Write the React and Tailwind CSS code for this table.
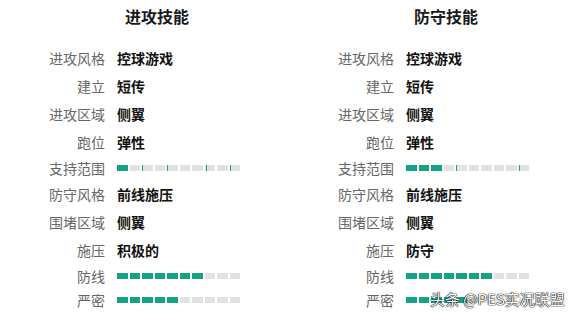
import React from 'react';

const attack = [
  { label: '进攻风格', value: '控球游戏' },
  { label: '建立', value: '短传' },
  { label: '进攻区域', value: '侧翼' },
  { label: '跑位', value: '弹性' },
];

const left = {
  title: '进攻技能',
  rows: [
    ...attack,
    { label: '支持范围', bar: 1, ticks: [25, 50, 89, 113] },
    { label: '防守风格', value: '前线施压' },
    { label: '围堵区域', value: '侧翼' },
    { label: '施压', value: '积极的' },
    { label: '防线', bar: 7 },
    { label: '严密', bar: 5 },
  ],
};

const right = {
  title: '防守技能',
  rows: [
    ...attack,
    { label: '支持范围', bar: 3, ticks: [50, 113] },
    { label: '防守风格', value: '前线施压' },
    { label: '围堵区域', value: '侧翼' },
    { label: '施压', value: '防守' },
    { label: '防线', bar: 7 },
    { label: '严密', bar: 5 },
  ],
};

function Bar({ filled, ticks = [] }) {
  return (
    <div className="relative grid w-[123px] grid-cols-10 gap-[2px]">
      {Array.from({ length: 10 }).map((_, i) => (
        <div key={i} className={`h-[6px] ${i < filled ? 'bg-[#13a384]' : 'bg-[#e2e2e2]'}`} />
      ))}
      {ticks.map((t) => (
        <div key={t} className="absolute top-0 h-[6px] w-px bg-[#13a384]" style={{ left: t }} />
      ))}
    </div>
  );
}

function Panel({ data }) {
  return (
    <div className="w-[289px]">
      <div className="flex h-[32px] w-[314px] items-center justify-center text-[16px] font-bold text-[#1a1a1a]">
        {data.title}
      </div>
      <div className="mt-[12px]">
        {data.rows.map((r) => (
          <div key={r.label} className={`flex items-center gap-[12px] ${r.bar ? 'h-[24px]' : 'h-[28px]'}`}>
            <div className="w-[105px] text-right text-[14px] text-[#666]">{r.label}</div>
            {r.bar ? (
              <Bar filled={r.bar} ticks={r.ticks} />
            ) : (
              <div className="text-[14px] font-bold text-[#111]">{r.value}</div>
            )}
          </div>
        ))}
      </div>
    </div>
  );
}

export default function App() {
  return (
    <div className="relative h-[320px] w-[578px] overflow-hidden bg-white font-['Noto_Sans_CJK_SC',sans-serif]">
      <div className="flex">
        <Panel data={left} />
        <Panel data={right} />
      </div>
      <div className="absolute left-[430px] top-[289px] text-[15px] leading-[20px] text-white [text-shadow:0_0_1px_#000,0_0_1px_#000,0_0_1px_#000]">
        头条 @PES实况联盟
      </div>
    </div>
  );
}
